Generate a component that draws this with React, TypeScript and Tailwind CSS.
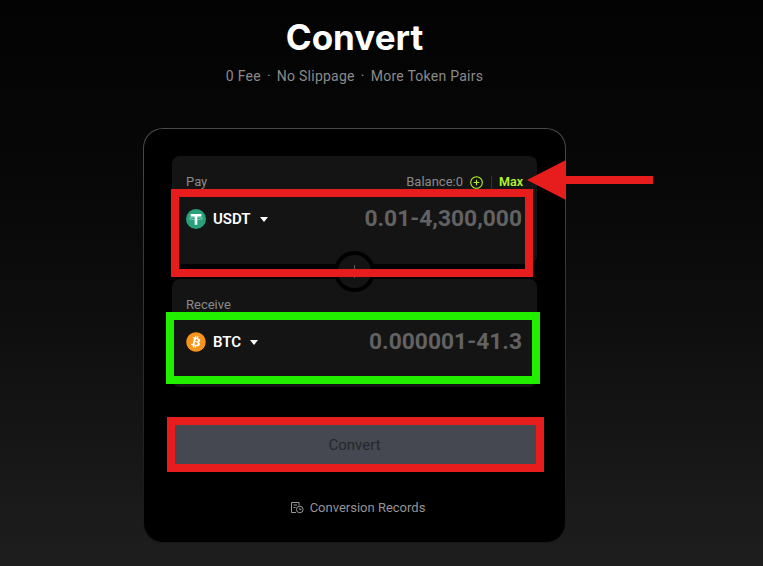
import { FaBitcoin } from "react-icons/fa";

function UsdtIcon() {
  return (
    <svg width="20" height="20" viewBox="0 0 20 20">
      <circle cx="10" cy="10" r="10" fill="#26a17b" />
      <ellipse cx="10" cy="9.400" rx="6.600" ry="1.300" fill="none" stroke="#bfe6da" strokeWidth="0.600" />
      <path d="M4.600 5h10.800v2.500h-4.100v8.300H8.700V7.500H4.600z" fill="#fff" />
    </svg>
  );
}

function BtcIcon() {
  return (
    <span className="flex h-5 w-5 items-center justify-center rounded-full bg-[radial-gradient(circle,#ffffff_65%,transparent_67%)]">
      <FaBitcoin size={20} color="#f7931a" />
    </span>
  );
}

function TokenPanel({
  label,
  icon,
  token,
  range,
  right,
}: {
  label: string;
  icon: React.ReactNode;
  token: string;
  range: string;
  right?: React.ReactNode;
}) {
  return (
    <div className="h-[108px] rounded-lg bg-[#141414] pl-[14px] pr-[15px] pt-[17px]">
      <div className="mt-px flex h-4 items-center justify-between text-[13px] text-[#8a8a8a]">
        <span>{label}</span>
        {right}
      </div>
      <div className="mt-[15px] flex h-7 items-center justify-between">
        <div className="flex items-center">
          {icon}
          <span className="ml-[7px] text-[15px] font-semibold text-white">{token}</span>
          <svg width="8" height="5" viewBox="0 0 8 5" className="ml-[9px] mt-px">
            <path d="M0 0h8L4 5z" fill="#fff" />
          </svg>
        </div>
        <span className="text-[22.800px] font-bold text-[#626262]">{range}</span>
      </div>
    </div>
  );
}

export default function App() {
  return (
    <div className="relative flex h-[566px] w-[763px] flex-col items-center overflow-hidden bg-gradient-to-b from-[#030303] via-[#0c0c0c] to-[#1e1e1e] pr-[54px] font-['Roboto',sans-serif]">
      {/* Header */}
      <h1 className="mt-[15px] font-['Inter',sans-serif] text-[35px] font-bold leading-[44px] text-white">Convert</h1>
      <p className="mt-[6px] flex gap-[6px] text-sm leading-[22px] tracking-[0.25px] text-[#8a8a8a]">
        <span>0 Fee</span>
        <span>·</span>
        <span>No Slippage</span>
        <span>·</span>
        <span>More Token Pairs</span>
      </p>

      {/* Card */}
      <div className="mt-[41px] h-[415px] w-[423px] shrink-0 rounded-[20px] bg-gradient-to-b from-[#4a4a4a] to-[#161616] p-px">
        <div className="flex h-full flex-col rounded-[19px] bg-black px-[28px] pt-[27px]">
          <TokenPanel
            label="Pay"
            icon={<UsdtIcon />}
            token="USDT"
            range="0.01-4,300,000"
            right={
              <div className="-mr-px flex items-center">
                <span>Balance:0</span>
                <svg width="13" height="13" viewBox="0 0 13 13" className="ml-[7px]" fill="none" stroke="#b4f32a" strokeWidth="1.100">
                  <circle cx="6.500" cy="6.500" r="5.800" />
                  <path d="M6.500 3.700v5.600M3.700 6.500h5.600" />
                </svg>
                <span className="mx-[7.500px] h-[13px] w-px bg-[#333333]" />
                <span className="text-[12.500px] font-semibold text-[#b4f32a]">Max</span>
              </div>
            }
          />
          <div className="relative mx-auto -my-[13px] flex h-[41px] w-[41px] shrink-0 items-center justify-center rounded-full border-4 border-black bg-[#141414]">
            <span className="h-[13px] w-px bg-[#5a5a5a]" />
          </div>
          <TokenPanel label="Receive" icon={<BtcIcon />} token="BTC" range="0.000001-41.3" />
          <button className="mt-[37px] h-[43px] w-[365px] shrink-0 self-center bg-[#454850] text-[15px] text-[#25272b]">Convert</button>
          <div className="mt-[31px] flex items-center justify-center gap-[6px] pl-[6px] text-[13px] text-[#949494]">
            <svg width="14" height="13" viewBox="0 0 14 13" fill="none" stroke="#9a9a9a" strokeWidth="1">
              <path d="M6 11.500H1.500v-10h7.500v3" />
              <path d="M3.500 4h3.500M3.500 6.500h2" />
              <circle cx="9.800" cy="8.500" r="3.300" />
              <path d="M9.800 6.800v1.800h1.500" />
            </svg>
            <span>Conversion Records</span>
          </div>
        </div>
      </div>

      {/* Annotations */}
      <div className="absolute left-[171px] top-[189px] h-[88px] w-[362px] border-[8px] border-[#e71d1d]" />
      <div className="absolute left-[166px] top-[312px] h-[72px] w-[374px] border-[8px] border-[#22ee00]" />
      <div className="absolute left-[167px] top-[417px] h-[55px] w-[377px] border-[8px] border-[#e71d1d]" />
      <svg className="absolute left-[527px] top-[160px]" width="127" height="40" viewBox="0 0 127 40">
        <path d="M0 20 39 0v16h87v8H39v16z" fill="#e71d1d" />
      </svg>
    </div>
  );
}
